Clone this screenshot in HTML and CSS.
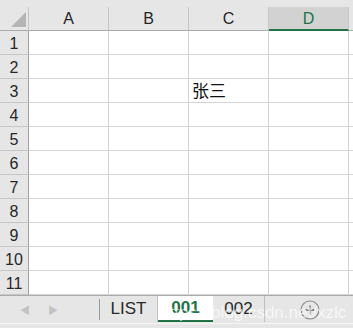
FILE: index.html
```html
<!DOCTYPE html>
<html lang="zh">
<head>
    <meta charset="UTF-8">
    <title>Sheet</title>
    <link rel="stylesheet" href="styles.css">
</head>
<body>
    <div class="top-band"></div>

    <!-- Grid -->
    <div class="sheet">
        <div class="corner">
            <svg width="29" height="24" viewBox="0 0 29 24"><polygon points="26,5 26,20 11,20" fill="#b5b5b5"/></svg>
        </div>
        <div class="col-head">A</div>
        <div class="col-head">B</div>
        <div class="col-head">C</div>
        <div class="col-head active">D</div>
        <div class="col-head edge"></div>
    </div>
    <div class="sheet body" id="rows"></div>

    <!-- Sheet tabs -->
    <div class="tabbar">
        <div class="nav">
            <span class="arrow">&#9664;</span>
            <span class="arrow">&#9654;</span>
        </div>
        <div class="sep"></div>
        <div class="tab tab-list">LIST</div>
        <div class="tab tab-current">001</div>
        <div class="tab tab-next">002</div>
        <div class="add">
            <svg width="20" height="20" viewBox="0 0 20 20">
                <circle cx="10" cy="10" r="9" fill="none" stroke="#8a8a8a" stroke-width="1.2"/>
                <path d="M10 5.5v9M5.5 10h9" stroke="#6a6a6a" stroke-width="1.3"/>
            </svg>
        </div>
        <div class="watermark">https://blog.csdn.net/xzlc</div>
    </div>

    <script>
        const rows = document.getElementById("rows");
        for (let r = 1; r <= 11; r++) {
            const head = document.createElement("div");
            head.className = "row-head";
            head.textContent = r;
            rows.appendChild(head);
            for (let c = 0; c < 5; c++) {
                const cell = document.createElement("div");
                cell.className = c === 4 ? "cell edge" : "cell";
                if (r === 3 && c === 2) cell.textContent = "张三";
                rows.appendChild(cell);
            }
        }
    </script>
</body>
</html>
```

FILE: styles.css
```css
body {
    margin: 0;
    width: 353px;
    height: 328px;
    overflow: hidden;
    background: #fff;
    font-family: "Liberation Sans", "Noto Sans CJK SC", sans-serif;
    color: #222;
}
.top-band {
    height: 7px;
    background: #e6e6e6;
}
.sheet {
    display: grid;
    grid-template-columns: 29px 80px 80px 80px 80px 4px;
    grid-auto-rows: 24px;
}
.sheet.body {
    grid-auto-rows: 24px;
}
.corner {
    background: #e6e6e6;
    border-bottom: 1px solid #ababab;
    border-right: 1px solid #c6c6c6;
    box-sizing: border-box;
}
.corner svg {
    display: block;
}
.col-head {
    background: #e6e6e6;
    border-right: 1px solid #c6c6c6;
    border-bottom: 1px solid #ababab;
    box-sizing: border-box;
    display: flex;
    align-items: center;
    justify-content: center;
    font-size: 16px;
    color: #262626;
    padding-top: 1px;
}
.col-head.active {
    background: #d2d2d2;
    border-bottom: 2px solid #217346;
    color: #217346;
}
.col-head.edge {
    border-right: none;
}
.row-head {
    background: #e6e6e6;
    border-right: 1px solid #9f9f9f;
    border-bottom: 1px solid #c6c6c6;
    box-sizing: border-box;
    display: flex;
    align-items: center;
    justify-content: center;
    font-size: 16px;
    color: #262626;
    padding-top: 2px;
}
.cell {
    border-right: 1px solid #d4d4d4;
    border-bottom: 1px solid #d4d4d4;
    box-sizing: border-box;
    font-size: 17px;
    color: #111;
    padding-left: 3px;
    display: flex;
    align-items: flex-end;
}
.cell.edge {
    border-right: none;
}

/* Tab bar */
.tabbar {
    position: relative;
    height: 33px;
    background: #e6e6e6;
    border-top: 1px solid #ababab;
    display: flex;
    align-items: flex-start;
    box-sizing: border-box;
}
.tabbar::after {
    content: "";
    position: absolute;
    left: 0;
    right: 0;
    top: 27px;
    height: 1px;
    background: #f4f4f4;
}
.nav {
    width: 99px;
    display: flex;
    gap: 18px;
    padding-left: 20px;
    box-sizing: border-box;
    height: 26px;
    align-items: center;
}
.arrow {
    font-size: 10px;
    color: #c2c2c2;
}
.sep {
    width: 1px;
    height: 21px;
    margin-top: 3px;
    background: #9a9a9a;
}
.tab {
    height: 26px;
    display: flex;
    align-items: center;
    justify-content: center;
    font-size: 17px;
    color: #2a2a2a;
    box-sizing: border-box;
    border-right: 1px solid #c0c0c0;
}
.tab-list {
    width: 58px;
}
.tab-current {
    width: 55px;
    background: #fff;
    color: #217346;
    font-weight: bold;
    border-right: none;
    border-bottom: 2px solid #217346;
}
.tab-next {
    width: 52px;
}
.add {
    margin-left: 35px;
    margin-top: 4px;
}
.add svg {
    display: block;
}
.watermark {
    position: absolute;
    left: 160px;
    top: 7px;
    font-size: 17px;
    color: rgba(255, 255, 255, 0.7);
    white-space: nowrap;
    pointer-events: none;
}
```
